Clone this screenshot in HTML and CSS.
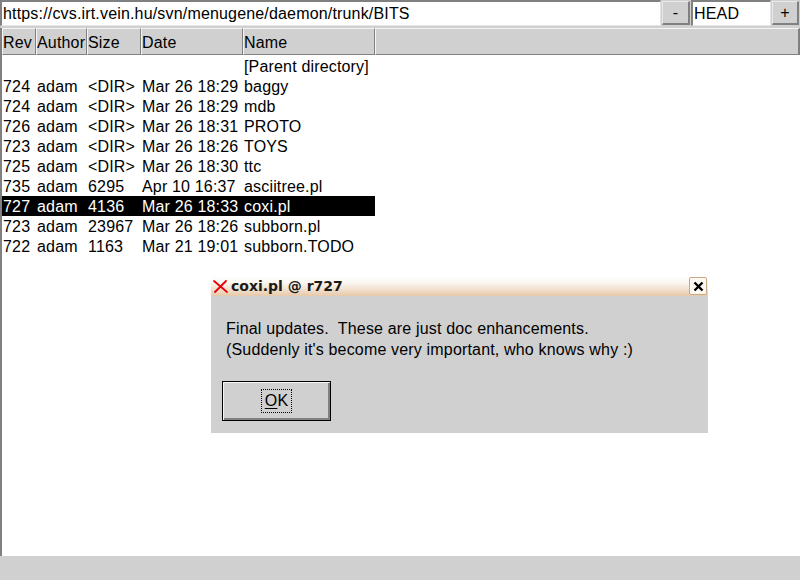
FILE: index.html
```html
<!DOCTYPE html>
<html>
<head>
<meta charset="utf-8">
<link rel="stylesheet" href="styles.css">
</head>
<body>
<div class="app">
  <div class="topbar">
    <div class="entry url">https://cvs.irt.vein.hu/svn/menugene/daemon/trunk/BITS</div>
    <div class="btn small">-</div>
    <div class="entry rev">HEAD</div>
    <div class="btn small">+</div>
  </div>
  <div class="frame">
    <div class="header">
      <div class="hcell">Rev</div>
      <div class="hcell">Author</div>
      <div class="hcell">Size</div>
      <div class="hcell">Date</div>
      <div class="hcell">Name</div>
      <div class="hcell filler"></div>
    </div>
    <div class="list">
      <div class="row"><span></span><span></span><span></span><span></span><span>[Parent directory]</span></div>
      <div class="row"><span>724</span><span>adam</span><span>&lt;DIR&gt;</span><span>Mar 26 18:29</span><span>baggy</span></div>
      <div class="row"><span>724</span><span>adam</span><span>&lt;DIR&gt;</span><span>Mar 26 18:29</span><span>mdb</span></div>
      <div class="row"><span>726</span><span>adam</span><span>&lt;DIR&gt;</span><span>Mar 26 18:31</span><span>PROTO</span></div>
      <div class="row"><span>723</span><span>adam</span><span>&lt;DIR&gt;</span><span>Mar 26 18:26</span><span>TOYS</span></div>
      <div class="row"><span>725</span><span>adam</span><span>&lt;DIR&gt;</span><span>Mar 26 18:30</span><span>ttc</span></div>
      <div class="row"><span>735</span><span>adam</span><span>6295</span><span>Apr 10 16:37</span><span>asciitree.pl</span></div>
      <div class="row selected"><span>727</span><span>adam</span><span>4136</span><span>Mar 26 18:33</span><span>coxi.pl</span></div>
      <div class="row"><span>723</span><span>adam</span><span>23967</span><span>Mar 26 18:26</span><span>subborn.pl</span></div>
      <div class="row"><span>722</span><span>adam</span><span>1163</span><span>Mar 21 19:01</span><span>subborn.TODO</span></div>
    </div>
  </div>
  <div class="statusbar"></div>
</div>

<div class="dialog">
  <div class="titlebar">
    <svg class="appicon" width="15" height="13" viewBox="0 0 15 13">
      <path d="M1 1 L14 12 M13 1 L2 12" stroke="#e8000b" stroke-width="1.8" fill="none" stroke-linecap="round"/>
    </svg>
    <span class="title">coxi.pl @ r727</span>
    <div class="close">
      <svg width="11" height="11" viewBox="0 0 11 11">
        <path d="M1.5 1.5 L9.5 9.5 M9.5 1.5 L1.5 9.5" stroke="#000" stroke-width="2.4" fill="none"/>
      </svg>
    </div>
  </div>
  <div class="dbody">
    <p class="msg">Final updates.&nbsp; These are just doc enhancements.<br>(Suddenly it's become very important, who knows why :)</p>
    <div class="okbtn"><span class="focus"><u>O</u>K</span></div>
  </div>
</div>
</body>
</html>
```

FILE: styles.css
```css
* { box-sizing: border-box; }
html, body {
  margin: 0;
  padding: 0;
  width: 800px;
  height: 580px;
  overflow: hidden;
  background: #ffffff;
  font-family: "Liberation Sans", Arial, sans-serif;
  font-size: 16px;
  letter-spacing: 0.17px;
  color: #000;
}
.app {
  display: flex;
  flex-direction: column;
  width: 800px;
  height: 580px;
}
.topbar {
  display: flex;
  align-items: flex-start;
  height: 28px;
  background: #d0d0d0;
  flex: none;
}
.entry {
  height: 26px;
  background: #fff;
  border-style: solid;
  border-width: 2px 1px 1px 2px;
  border-color: #808080 #e4e4e4 #e4e4e4 #808080;
  padding-left: 1px;
  line-height: 24px;
  white-space: nowrap;
  overflow: hidden;
}
.url { width: 661px; }
.rev { width: 80px; margin-left: 1px; }
.btn.small {
  width: 28px;
  height: 24px;
  margin-top: 1px;
  margin-left: 1px;
  background: #d0d0d0;
  border-style: solid;
  border-width: 1px 2px 2px 1px;
  border-color: #e8e8e8 #808080 #808080 #e8e8e8;
  text-align: center;
  line-height: 22px;
}
.btn.small:last-child { width: 27px; }
.frame {
  flex: 1;
  display: flex;
  flex-direction: column;
  border-left: 2px solid #808080;
  min-height: 0;
}
.header {
  display: grid;
  grid-template-columns: 34px 51px 54px 102px 132px 1fr;
  height: 27px;
  flex: none;
}
.hcell {
  background: #d0d0d0;
  border-style: solid;
  border-width: 1px;
  border-color: #f4f4f4 #808080 #808080 #f4f4f4;
  line-height: 27px;
  padding-left: 0;
  white-space: nowrap;
  overflow: hidden;
}
.hcell.filler { border-right-width: 2px; }
.list {
  flex: 1;
  padding-top: 1px;
}
.row {
  display: grid;
  grid-template-columns: 34px 51px 54px 102px 132px;
  width: 373px;
  height: 20px;
  white-space: nowrap;
}
.row span {
  height: 20px;
  padding-left: 1px;
  padding-top: 1px;
  line-height: 20px;
  overflow: hidden;
}
.row.selected { background: #000; color: #fff; }
.statusbar {
  height: 24px;
  background: #d0d0d0;
  flex: none;
}
.dialog {
  position: absolute;
  left: 211px;
  top: 276px;
  width: 497px;
  height: 157px;
  display: flex;
  flex-direction: column;
}
.titlebar {
  height: 20px;
  flex: none;
  display: flex;
  align-items: center;
  padding-left: 2px;
  background: linear-gradient(#ffffff 0%, #fbf6f0 35%, #e7c9a9 100%);
  position: relative;
  letter-spacing: 0;
}
.appicon { margin-top: 1px; }
.title {
  margin-left: 3px;
  font-family: "DejaVu Sans", sans-serif;
  font-weight: bold;
  font-size: 14px;
  color: #1a1a1a;
  line-height: 20px;
}
.close {
  position: absolute;
  right: 1px;
  top: 1px;
  width: 18px;
  height: 18px;
  border: 1px solid #c9a886;
  border-radius: 2px;
  background: #fdf8f2;
  display: flex;
  align-items: center;
  justify-content: center;
}
.dbody {
  flex: 1;
  background: #d0d0d0;
  padding: 22px 11px 0 11px;
}
.msg {
  margin: 0 0 0 4px;
  line-height: 21px;
}
.okbtn {
  margin-top: 21px;
  width: 109px;
  height: 40px;
  border: 1px solid #000;
  box-shadow: inset 1px 1px 0 #f4f4f4, inset -2px -2px 0 #808080;
  display: flex;
  align-items: center;
  justify-content: center;
}
.focus {
  border: 1px dotted #000;
  padding: 1px 3px;
  line-height: 20px;
}
.focus u { text-decoration-thickness: 1px; text-underline-offset: 2px; }
```
